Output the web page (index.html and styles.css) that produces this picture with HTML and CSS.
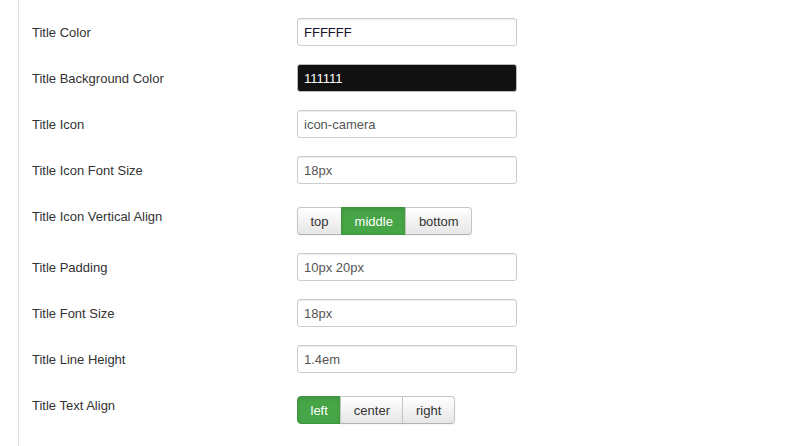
FILE: index.html
```html
<!DOCTYPE html>
<html>
<head>
<meta charset="utf-8">
<link rel="stylesheet" href="styles.css">
</head>
<body>
<div class="panel">
  <div class="row">
    <label class="label">Title Color</label>
    <div class="controls"><input class="field field-color" type="text" value="FFFFFF"></div>
  </div>
  <div class="row">
    <label class="label">Title Background Color</label>
    <div class="controls"><input class="field field-dark" type="text" value="111111"></div>
  </div>
  <div class="row">
    <label class="label">Title Icon</label>
    <div class="controls"><input class="field" type="text" value="icon-camera"></div>
  </div>
  <div class="row">
    <label class="label">Title Icon Font Size</label>
    <div class="controls"><input class="field" type="text" value="18px"></div>
  </div>
  <div class="row row-radio">
    <label class="label">Title Icon Vertical Align</label>
    <div class="controls">
      <div class="btn-group">
        <span class="btn">top</span><span class="btn active">middle</span><span class="btn">bottom</span>
      </div>
    </div>
  </div>
  <div class="row">
    <label class="label">Title Padding</label>
    <div class="controls"><input class="field" type="text" value="10px 20px"></div>
  </div>
  <div class="row">
    <label class="label">Title Font Size</label>
    <div class="controls"><input class="field" type="text" value="18px"></div>
  </div>
  <div class="row">
    <label class="label">Title Line Height</label>
    <div class="controls"><input class="field" type="text" value="1.4em"></div>
  </div>
  <div class="row row-radio">
    <label class="label">Title Text Align</label>
    <div class="controls">
      <div class="btn-group">
        <span class="btn active">left</span><span class="btn">center</span><span class="btn">right</span>
      </div>
    </div>
  </div>
</div>
</body>
</html>
```

FILE: styles.css
```css
html, body {
  margin: 0;
  padding: 0;
  background: #fff;
}
body {
  font-family: "Liberation Sans", Arial, sans-serif;
  font-size: 13px;
  line-height: 18px;
  color: #333;
  height: 446px;
  overflow: hidden;
}
.panel {
  margin-left: 18px;
  border-left: 1px solid #dddddd;
  padding-left: 13px;
  padding-top: 18px;
  height: 446px;
  box-sizing: border-box;
}
.row {
  display: flex;
  margin-bottom: 18px;
}
.label {
  width: 265px;
  padding-top: 6px;
  flex: none;
}
.row-radio .controls {
  padding-top: 5px;
}
.field {
  display: block;
  width: 220px;
  height: 28px;
  box-sizing: border-box;
  padding: 4px 6px;
  margin: 0;
  border: 1px solid #cccccc;
  border-radius: 3px;
  box-shadow: inset 0 1px 1px rgba(0,0,0,0.075);
  font-family: "Liberation Sans", Arial, sans-serif;
  font-size: 13px;
  line-height: 18px;
  color: #555555;
  background: #fff;
  outline: none;
}
.field-color {
  color: #1a1033;
}
.field-dark {
  background: #111111;
  color: #ffffff;
  border-color: #bbbbbb;
}
.btn-group {
  display: flex;
}
.btn {
  display: block;
  height: 28px;
  box-sizing: border-box;
  padding: 5px 12.5px 3px;
  border: 1px solid #c5c5c5;
  border-bottom-color: #b3b3b3;
  background: linear-gradient(#ffffff, #e6e6e6);
  box-shadow: inset 0 1px 0 rgba(255,255,255,0.2), 0 1px 2px rgba(0,0,0,0.05);
  color: #333;
  text-align: center;
}
.btn + .btn {
  margin-left: -1px;
}
.btn:first-child {
  border-radius: 4px 0 0 4px;
}
.btn:last-child {
  border-radius: 0 4px 4px 0;
}
.btn.active {
  background: #46a546;
  border-color: #3f943f;
  color: #ffffff;
  box-shadow: inset 0 2px 4px rgba(0,0,0,0.1);
}
```
